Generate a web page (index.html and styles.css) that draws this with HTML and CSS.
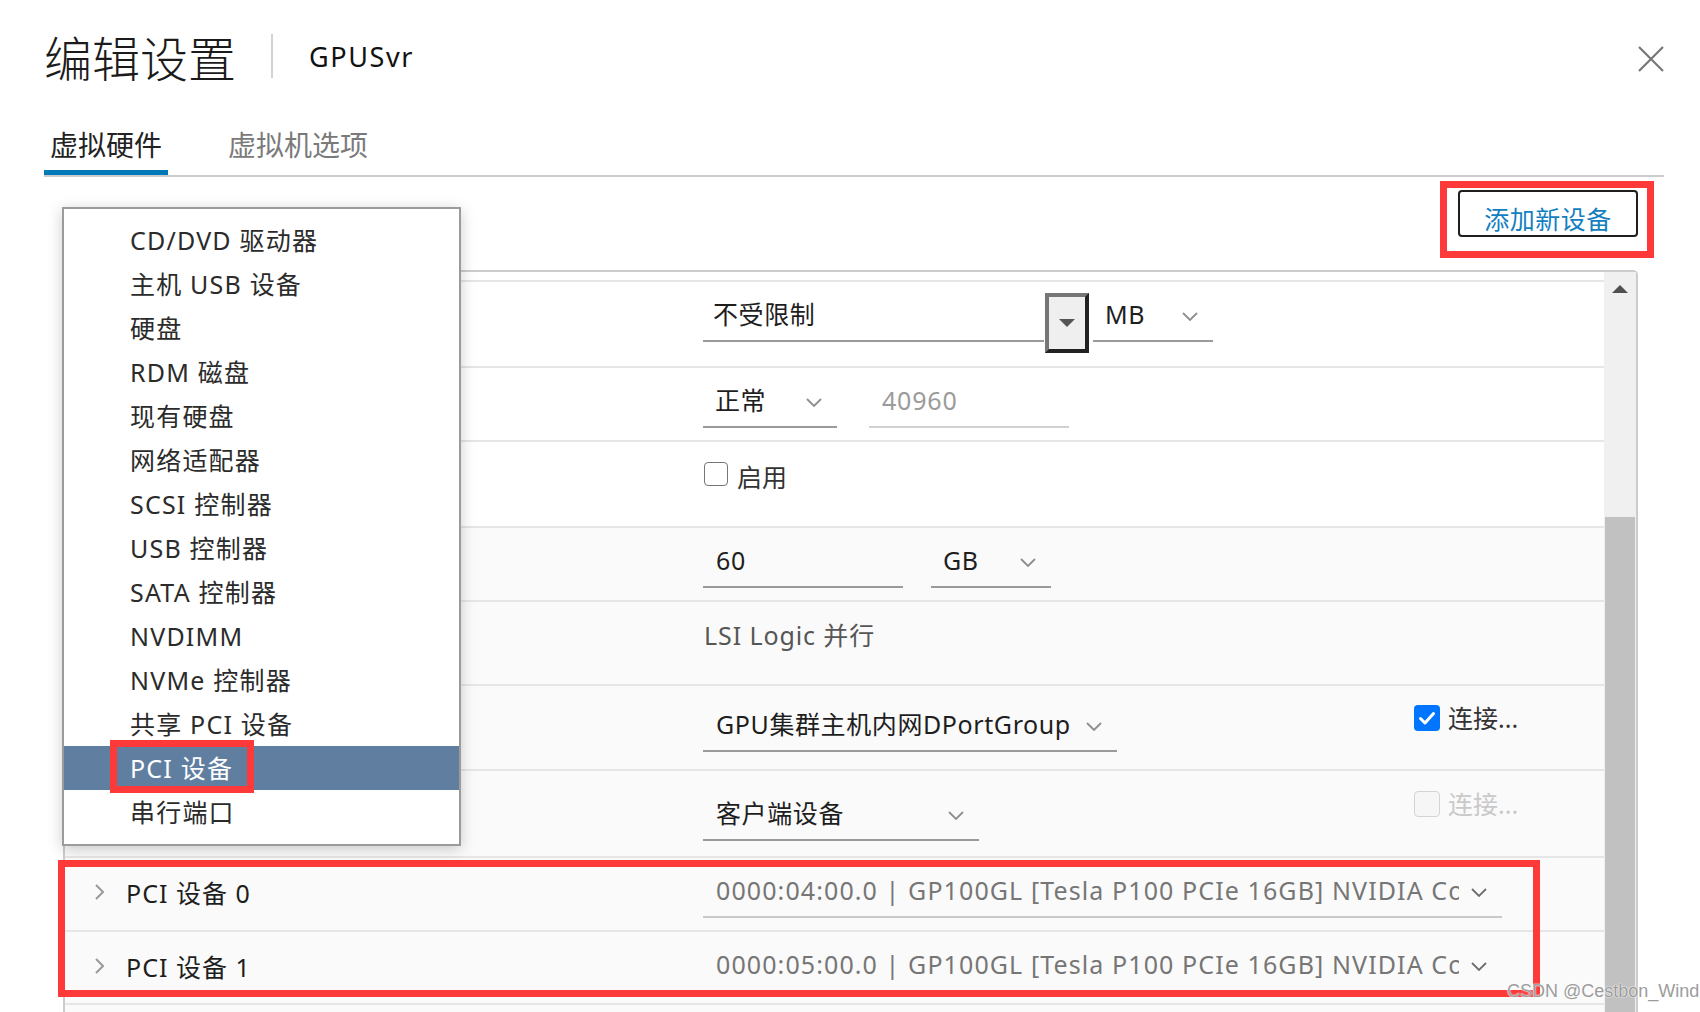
FILE: index.html
```html
<!DOCTYPE html>
<html lang="zh-CN">
<head>
	<meta charset="UTF-8">
	<meta name="viewport" content="width=device-width, initial-scale=1.0">
	<title>编辑设置 - GPUSvr</title>
	<link rel="stylesheet" href="styles.css">
</head>
<body>

<div class="dialog">

	<!-- Title bar -->
	<div class="header">
		<h1 class="title">编辑设置</h1>
		<span class="title-sep"></span>
		<span class="vm-name">GPUSvr</span>
		<button class="close-btn" aria-label="关闭">
			<svg width="26" height="26" viewBox="0 0 26 26"><path d="M1 1L25 25M25 1L1 25" stroke="#767676" stroke-width="2.2" fill="none"/></svg>
		</button>
	</div>

	<!-- Tabs -->
	<div class="tabs">
		<div class="tab active">虚拟硬件</div>
		<div class="tab">虚拟机选项</div>
	</div>

	<!-- Add device button (red box is a screenshot annotation) -->
	<div class="toolbar">
		<div class="mark-box">
			<button class="add-btn">添加新设备</button>
		</div>
	</div>

	<!-- Hardware list -->
	<div class="panel">
		<div class="rows">
			<div class="row-top"></div>

			<div class="row child row-a">
				<div class="label"></div>
				<div class="value">
					<div class="select w-limit"><span class="txt">不受限制</span></div>
					<div class="drop-btn">
						<svg width="16" height="8" viewBox="0 0 16 8"><path d="M0 0H16L8 8Z" fill="#555"/></svg>
					</div>
					<div class="select w-unit gap-4">
						<span class="txt">MB</span>
						<svg class="chev" viewBox="0 0 16 9"><polyline points="1,1 8,8 15,1"/></svg>
					</div>
				</div>
			</div>

			<div class="row child">
				<div class="label"></div>
				<div class="value">
					<div class="select w-level">
						<span class="txt">正常</span>
						<svg class="chev" viewBox="0 0 16 9"><polyline points="1,1 8,8 15,1"/></svg>
					</div>
					<div class="field muted w-num gap-32">40960</div>
				</div>
			</div>

			<div class="row child row-c">
				<div class="label"></div>
				<div class="value">
					<div class="check-line">
						<span class="cb"></span>
						<span>启用</span>
					</div>
				</div>
			</div>

			<div class="row">
				<div class="label"></div>
				<div class="value">
					<div class="field w-num">60</div>
					<div class="select w-unit gap-28">
						<span class="txt">GB</span>
						<svg class="chev" viewBox="0 0 16 9"><polyline points="1,1 8,8 15,1"/></svg>
					</div>
				</div>
			</div>

			<div class="row row-e">
				<div class="label"></div>
				<div class="value">
					<div class="plain">LSI Logic 并行</div>
				</div>
			</div>

			<div class="row row-f">
				<div class="label"></div>
				<div class="value">
					<div class="select w-net">
						<span class="txt">GPU集群主机内网DPortGroup</span>
						<svg class="chev" viewBox="0 0 16 9"><polyline points="1,1 8,8 15,1"/></svg>
					</div>
					<div class="connect on">
						<span class="cb-on">
							<svg width="26" height="26" viewBox="0 0 26 26"><path d="M6.5 13.5L11 18L19.5 8.5" stroke="#fff" stroke-width="3" fill="none" stroke-linecap="round" stroke-linejoin="round"/></svg>
						</span>
						<span>连接...</span>
					</div>
				</div>
			</div>

			<div class="row row-g">
				<div class="label"></div>
				<div class="value">
					<div class="select w-cd">
						<span class="txt">客户端设备</span>
						<svg class="chev" viewBox="0 0 16 9"><polyline points="1,1 8,8 15,1"/></svg>
					</div>
					<div class="connect off">
						<span class="cb cb-disabled"></span>
						<span>连接...</span>
					</div>
				</div>
			</div>

			<div class="row">
				<div class="label">
					<svg class="arrow" viewBox="0 0 9 16"><polyline points="1,1 8,8 1,15"/></svg>
					<span>PCI 设备 0</span>
				</div>
				<div class="value">
					<div class="select pci w-pci">
						<span class="txt">0000:04:00.0 | GP100GL [Tesla P100 PCIe 16GB] NVIDIA Corporation</span>
						<svg class="chev" viewBox="0 0 16 9"><polyline points="1,1 8,8 15,1"/></svg>
					</div>
				</div>
			</div>

			<div class="row row-i">
				<div class="label">
					<svg class="arrow" viewBox="0 0 9 16"><polyline points="1,1 8,8 1,15"/></svg>
					<span>PCI 设备 1</span>
				</div>
				<div class="value">
					<div class="select pci w-pci">
						<span class="txt">0000:05:00.0 | GP100GL [Tesla P100 PCIe 16GB] NVIDIA Corporation</span>
						<svg class="chev" viewBox="0 0 16 9"><polyline points="1,1 8,8 15,1"/></svg>
					</div>
				</div>
			</div>

			<div class="row row-last"></div>
		</div>

		<!-- Scrollbar -->
		<div class="scrollbar">
			<div class="sb-up">
				<svg width="16" height="8" viewBox="0 0 16 8"><path d="M0 8H16L8 0Z" fill="#505050"/></svg>
			</div>
			<div class="sb-gap"></div>
			<div class="sb-thumb"></div>
		</div>

		<!-- Add-device dropdown menu -->
		<div class="menu">
			<div class="menu-item">CD/DVD 驱动器</div>
			<div class="menu-item">主机 USB 设备</div>
			<div class="menu-item">硬盘</div>
			<div class="menu-item">RDM 磁盘</div>
			<div class="menu-item">现有硬盘</div>
			<div class="menu-item">网络适配器</div>
			<div class="menu-item">SCSI 控制器</div>
			<div class="menu-item">USB 控制器</div>
			<div class="menu-item">SATA 控制器</div>
			<div class="menu-item">NVDIMM</div>
			<div class="menu-item">NVMe 控制器</div>
			<div class="menu-item">共享 PCI 设备</div>
			<div class="menu-item selected">PCI 设备<span class="menu-mark"></span></div>
			<div class="menu-item">串行端口</div>
		</div>

		<!-- Annotation around the two PCI rows -->
		<div class="pci-mark"></div>
	</div>

</div>

<div class="watermark">CSDN @Cestbon_Wind</div>

</body>
</html>
```

FILE: styles.css
```css
* {
	box-sizing: border-box;
}

body {
	margin: 0;
	background: #fff;
	color: #1e1e1e;
	font-family: "Noto Sans", "Noto Sans CJK SC", sans-serif;
	height: 1012px;
	overflow: hidden;
	position: relative;
}

.dialog {
	width: 1620px;
	margin-left: 44px;
}

/* ---- title bar ---- */
.header {
	display: flex;
	align-items: center;
	height: 112px;
}

.title {
	margin: 0;
	font-family: "Noto Sans CJK SC", sans-serif;
	font-size: 48px;
	font-weight: 300;
	line-height: 64px;
	color: #1b1b1b;
}

.title-sep {
	width: 2px;
	height: 44px;
	background: #d2d2d2;
	margin: 0 36px 0 35px;
}

.vm-name {
	font-size: 27px;
	color: #111;
	letter-spacing: 1.6px;
}

.close-btn {
	margin-left: auto;
	margin-top: 6px;
	width: 26px;
	height: 26px;
	padding: 0;
	border: none;
	background: none;
}

/* ---- tabs ---- */
.tabs {
	display: flex;
	height: 65px;
	border-bottom: 2px solid #cccccc;
}

.tab {
	height: 63px;
	padding: 13px 6px 0;
	margin-right: 54px;
	font-family: "Noto Sans CJK SC", sans-serif;
	font-size: 28px;
	line-height: 38px;
	color: #7a7a7a;
}

.tab.active {
	color: #222;
	border-bottom: 5px solid #0079b8;
}

/* ---- toolbar ---- */
.toolbar {
	display: flex;
	justify-content: flex-end;
	height: 93px;
	padding: 4px 10px 0 0;
}

.mark-box {
	height: 77px;
	border: 7px solid #fd3939;
	padding: 2px 9px 0 11px;
}

.add-btn {
	width: 180px;
	height: 47px;
	padding: 8px 0 0;
	border: 2px solid #1e1e1e;
	border-radius: 4px;
	background: #fff;
	color: #137fc0;
	font-family: "Noto Sans CJK SC", sans-serif;
	font-size: 25px;
	letter-spacing: 0.5px;
}

/* ---- hardware panel ---- */
.panel {
	position: relative;
	display: flex;
	height: 742px;
	margin: 0 26px 0 19px;
	border: 2px solid #cccccc;
	border-bottom: none;
	border-radius: 5px 5px 0 0;
}

.rows {
	flex: 1;
	min-width: 0;
	background: #fafafa;
}

.row-top {
	height: 8px;
	background: #fff;
}

.row {
	display: flex;
	height: 74px;
	padding-top: 12px;
	border-top: 2px solid #e6e6e6;
	background: #fafafa;
}

.row.child {
	background: #fff;
}

.row-a { height: 86px; }
.row-c { height: 86px; }
.row-e { height: 84px; }
.row-f { height: 85px; padding-top: 18px; }
.row-g { height: 87px; padding-top: 22px; }
.row-i { height: 73px; }
.row-last { height: 9px; padding-top: 0; }

.label {
	width: 638px;
	flex: none;
	display: flex;
	align-items: center;
	height: 48px;
	padding: 0 0 5px 30px;
	font-size: 25px;
	color: #1e1e1e;
	letter-spacing: 1px;
}

.label .arrow {
	width: 9px;
	height: 16px;
	margin-right: 22px;
	fill: none;
	stroke: #9a9a9a;
	stroke-width: 2;
}

.value {
	flex: 1;
	min-width: 0;
	display: flex;
	align-items: flex-start;
}

.select {
	display: flex;
	align-items: center;
	height: 48px;
	padding: 0 15px 5px 13px;
	border-bottom: 2px solid #9a9a9a;
	font-size: 25px;
	line-height: 41px;
	color: #1e1e1e;
	white-space: nowrap;
	letter-spacing: 0.6px;
}

.select .txt {
	flex: 1;
	overflow: hidden;
}

.chev {
	width: 16px;
	height: 9px;
	flex: none;
	margin: 4px 0 0 12px;
	fill: none;
	stroke: #8e8e8e;
	stroke-width: 1.8;
}

.w-limit { width: 341px; padding-left: 10px; }
.w-unit { width: 120px; padding-left: 12px; }
.w-level { width: 134px; padding-left: 12px; }
.w-num { width: 200px; }
.w-net { width: 414px; }
.w-cd { width: 276px; }
.w-pci { width: 799px; }

.gap-4 { margin-left: 4px; }
.gap-28 { margin-left: 28px; }
.gap-32 { margin-left: 32px; }

.select.pci {
	color: #767676;
	border-bottom-color: #c9c9c9;
	letter-spacing: 1.1px;
}

.select.pci .chev {
	stroke: #6e6e6e;
}

.field {
	height: 48px;
	padding-left: 13px;
	border-bottom: 2px solid #9a9a9a;
	font-size: 25px;
	line-height: 41px;
	letter-spacing: 0.8px;
}

.field.muted {
	color: #9b9b9b;
	border-bottom-color: #d0d0d0;
}

.drop-btn {
	width: 44px;
	height: 60px;
	margin: -1px 0 0 1px;
	display: flex;
	align-items: center;
	justify-content: center;
	background: #efefef;
	border: 4px solid;
	border-color: #767676 #222 #222 #767676;
}

.check-line {
	display: flex;
	align-items: center;
	height: 48px;
	padding-bottom: 4px;
	font-size: 25px;
	color: #333;
}

.cb {
	width: 24px;
	height: 24px;
	margin: -4px 9px 0 1px;
	border: 1.5px solid #767676;
	border-radius: 4px;
	background: #fff;
}

.plain {
	height: 48px;
	padding-left: 1px;
	font-size: 25px;
	line-height: 43px;
	color: #565656;
	letter-spacing: 0.9px;
}

.connect {
	margin-left: auto;
	width: 190px;
	display: flex;
	align-items: center;
	height: 48px;
	font-size: 25px;
	color: #333;
}

.connect.on {
	margin-top: -11px;
}

.connect.off {
	margin-top: -14px;
	color: #c9c9c9;
}

.cb-on {
	width: 26px;
	height: 26px;
	margin: 2px 8px 0 0;
	border-radius: 4px;
	background: #0075ff;
}

.cb-on svg {
	display: block;
}

.cb.cb-disabled {
	width: 26px;
	height: 26px;
	margin: 2px 8px 0 0;
	border-color: #d4d4d4;
	background: #f6f6f6;
}

/* ---- scrollbar ---- */
.scrollbar {
	width: 32px;
	flex: none;
	display: flex;
	flex-direction: column;
	background: #f0f0f0;
}

.sb-up {
	height: 34px;
	display: flex;
	align-items: center;
	justify-content: center;
}

.sb-gap {
	height: 211px;
}

.sb-thumb {
	flex: 1;
	margin: 0 1px;
	background: #c1c1c1;
}

/* ---- dropdown menu ---- */
.menu {
	position: absolute;
	left: -3px;
	top: -65px;
	width: 399px;
	height: 639px;
	padding-top: 9px;
	background: #fff;
	border: 2px solid #9b9b9b;
	box-shadow: 0 3px 14px rgba(0, 0, 0, 0.2);
	z-index: 5;
}

.menu-item {
	height: 44px;
	padding-left: 66px;
	font-size: 25px;
	line-height: 44px;
	color: #2b2b2b;
	white-space: nowrap;
	letter-spacing: 1.2px;
}

.menu-item.selected {
	position: relative;
	background: #5f7ea0;
	color: #fff;
}

/* screenshot annotations */
.menu-mark {
	position: absolute;
	left: 46px;
	top: -6px;
	width: 144px;
	height: 53px;
	border: 7px solid #fd3939;
}

.pci-mark {
	position: absolute;
	left: -7px;
	top: 588px;
	width: 1482px;
	height: 137px;
	border: 7px solid #fd3939;
	z-index: 4;
}

.watermark {
	position: absolute;
	left: 1507px;
	top: 981px;
	font-family: "Liberation Sans", sans-serif;
	font-size: 18px;
	color: #9c9c9c;
	text-shadow: 0 0 2px #fff, 0 0 1px #fff;
	z-index: 6;
}
```
